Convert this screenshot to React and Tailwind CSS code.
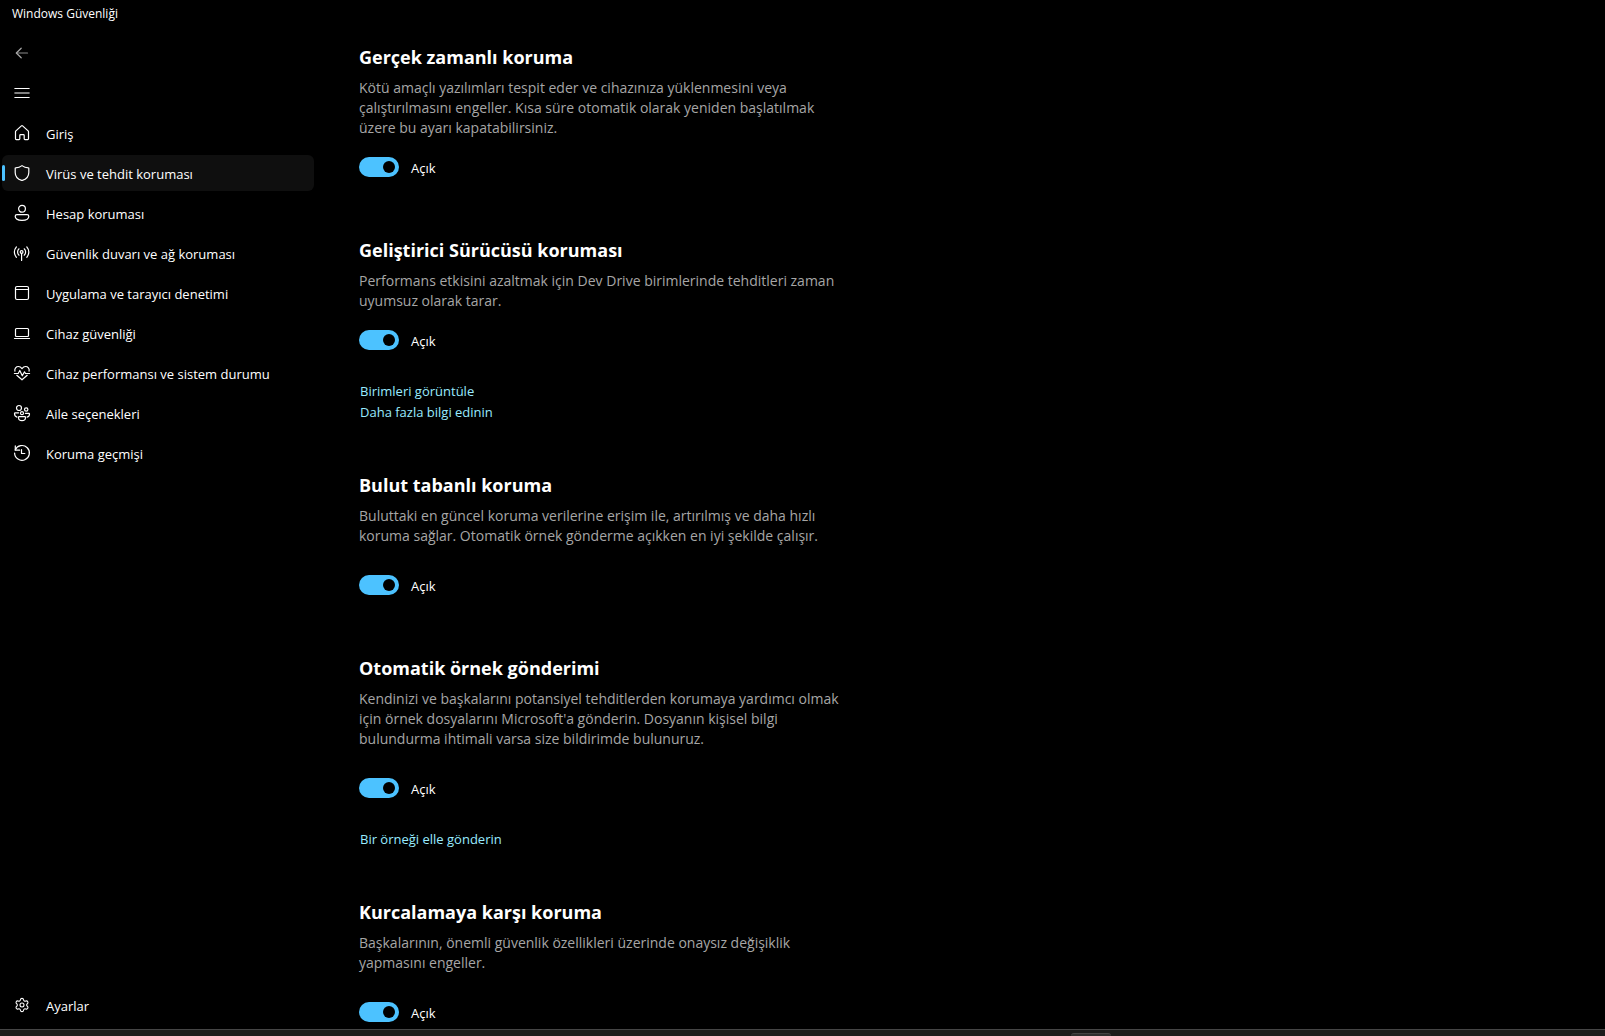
import { useState } from "react";
import { Settings } from "lucide-react";

function Icon({ children }) {
  return (
    <svg
      viewBox="0 0 16 16"
      className="size-4 shrink-0 overflow-visible"
      fill="none"
      stroke="currentColor"
      strokeWidth="1.2"
      strokeLinecap="round"
      strokeLinejoin="round"
      aria-hidden="true"
    >
      {children}
    </svg>
  );
}

const icons = {
  back: (
    <Icon>
      <path d="M2.5 8h11" stroke="#8a8a8a" />
      <path d="M7.2 3.2L2.3 8l4.9 4.8" stroke="#a8a8a8" />
    </Icon>
  ),
  menu: (
    <Icon>
      <path d="M.8 3.5h14.4M.8 12.5h14.4" strokeWidth="1" />
      <path d="M.8 8h14.4" strokeWidth="1" />
    </Icon>
  ),
  home: (
    <Icon>
      <path d="M7.4.9a.9.9 0 0 1 1.2 0l5.5 5c.3.3.4.6.4.9v7c0 .5-.3.8-.8.8h-2.7c-.5 0-.8-.3-.8-.8v-3.3c0-.5-.3-.8-.8-.8H6.600c-.5 0-.8.3-.8.8v3.3c0 .5-.3.8-.8.8H2.3c-.5 0-.8-.3-.8-.8v-7c0-.3.1-.6.4-.9z" />
    </Icon>
  ),
  shield: (
    <Icon>
      <path d="M8 .6c1.8 1.5 4 2.2 6.5 2.3.2 0 .3.2.3.4v4.1c0 3.9-2.2 6.6-6.5 8a1 1 0 0 1-.6 0C3.4 14 1.2 11.3 1.2 7.4V3.3c0-.2.1-.4.3-.4C4 2.8 6.2 2.1 8 .6z" />
    </Icon>
  ),
  person: (
    <Icon>
      <circle cx="8" cy="3.8" r="3.4" />
      <path d="M3 9.6h10c1 0 1.8.8 1.8 1.7 0 2.600-2.9 4.100-6.800 4.100s-6.800-1.500-6.800-4.100c0-.9.8-1.7 1.800-1.700z" />
    </Icon>
  ),
  antenna: (
    <Icon>
      <circle cx="7.6" cy="7" r="1.4" />
      <path d="M7.6 8.4v7.1M5 10.2a4.300 4.300 0 0 1 0-6.400M10.200 10.200a4.300 4.300 0 0 0 0-6.400M2.400 12.300C-.1 9-.1 5 2.400 1.900M12.800 12.300c2.500-3.300 2.500-7.300 0-10.400" />
    </Icon>
  ),
  window: (
    <Icon>
      <rect x="1.5" y="1.5" width="13" height="13" rx="1.5" />
      <path d="M1.5 4.500h13" />
    </Icon>
  ),
  laptop: (
    <Icon>
      <rect x="1.5" y="3.5" width="13" height="8" rx="1" />
      <path d="M.5 13.500h15" />
    </Icon>
  ),
  heart: (
    <Icon>
      <path d="M.9 6.200C.3 3.300 2.200 1.500 4.400 1.500c1.600 0 2.600.8 3.600 2.200 1-1.400 2-2.200 3.600-2.200 2.200 0 4.100 1.800 3.500 4.700M2.800 10.300L8 14.800l5.200-4.500" />
      <path d="M.4 8.500h3.800l1.600-3 2.500 5.300 2.200-4 1 1.700h4.100" />
    </Icon>
  ),
  family: (
    <Icon>
      <circle cx="5" cy="3" r="2.500" />
      <circle cx="12.200" cy="4.500" r="1.700" />
      <circle cx="8" cy="8.200" r="1.500" />
      <path d="M5.200 11.700h5.600c.4 0 .7.3.7.7 0 2-1.500 3.200-3.500 3.200s-3.500-1.200-3.500-3.200c0-.4.3-.7.7-.7z" />
      <path d="M4.600 7.800H1.200c-.4 0-.7.3-.7.7 0 1.800.9 3.100 2.500 3.600M11.400 8.300h3.400c.4 0 .7.3.7.7 0 1.600-.8 2.700-2.400 3.100" />
    </Icon>
  ),
  history: (
    <Icon>
      <path d="M1.200 5A7.400 7.400 0 1 1 .6 8" />
      <path d="M1.300.9v4.300h4.300M7.500 4.500v4h3.300" />
    </Icon>
  ),
  settings: <Settings className="size-4 shrink-0" strokeWidth={1.6} aria-hidden="true" />,
};

const navItems = [
  { icon: "home", label: "Giriş" },
  { icon: "shield", label: "Virüs ve tehdit koruması" },
  { icon: "person", label: "Hesap koruması" },
  { icon: "antenna", label: "Güvenlik duvarı ve ağ koruması" },
  { icon: "window", label: "Uygulama ve tarayıcı denetimi" },
  { icon: "laptop", label: "Cihaz güvenliği" },
  { icon: "heart", label: "Cihaz performansı ve sistem durumu" },
  { icon: "family", label: "Aile seçenekleri" },
  { icon: "history", label: "Koruma geçmişi" },
];

const sections = [
  {
    id: "realtime",
    title: "Gerçek zamanlı koruma",
    text: "Kötü amaçlı yazılımları tespit eder ve cihazınıza yüklenmesini veya çalıştırılmasını engeller. Kısa süre otomatik olarak yeniden başlatılmak üzere bu ayarı kapatabilirsiniz.",
    compact: true,
    links: [],
  },
  {
    id: "devdrive",
    title: "Geliştirici Sürücüsü koruması",
    text: "Performans etkisini azaltmak için Dev Drive birimlerinde tehditleri zaman uyumsuz olarak tarar.",
    compact: true,
    links: ["Birimleri görüntüle", "Daha fazla bilgi edinin"],
  },
  {
    id: "cloud",
    title: "Bulut tabanlı koruma",
    text: "Buluttaki en güncel koruma verilerine erişim ile, artırılmış ve daha hızlı koruma sağlar. Otomatik örnek gönderme açıkken en iyi şekilde çalışır.",
    links: [],
  },
  {
    id: "samples",
    title: "Otomatik örnek gönderimi",
    text: "Kendinizi ve başkalarını potansiyel tehditlerden korumaya yardımcı olmak için örnek dosyalarını Microsoft'a gönderin. Dosyanın kişisel bilgi bulundurma ihtimali varsa size bildirimde bulunuruz.",
    links: ["Bir örneği elle gönderin"],
  },
  {
    id: "tamper",
    title: "Kurcalamaya karşı koruma",
    text: "Başkalarının, önemli güvenlik özellikleri üzerinde onaysız değişiklik yapmasını engeller.",
    links: [],
    last: true,
  },
];

function NavButton({ icon, label, active, onClick }) {
  return (
    <button
      type="button"
      onClick={onClick}
      aria-current={active ? "page" : undefined}
      className={`relative flex h-9 w-full items-center gap-4 rounded-md pl-3 text-left text-[13px] leading-5 ${active ? "bg-[#0f0f0f]" : ""}`}
    >
      {active && <span className="absolute left-0 h-4 w-[3px] rounded-full bg-[#4cc2ff]" />}
      {icons[icon]}
      <span className="pt-0.5">{label}</span>
    </button>
  );
}

function Section({ id, title, text, compact, links, last }) {
  const [on, setOn] = useState(true);
  const spacing = last ? "" : links.length ? "mb-12" : "mb-[59px]";
  return (
    <section className={spacing}>
      <h2 className="text-[18px] leading-7 font-bold">{title}</h2>
      <p className="mt-[7px] text-[14px] leading-5 text-[#a6a6a6]">{text}</p>
      <div className={`flex h-5 items-center gap-3 ${compact ? "mt-[19px]" : "mt-[29px]"}`}>
        <input
          id={id}
          type="checkbox"
          role="switch"
          checked={on}
          onChange={() => setOn(!on)}
          aria-label={title}
          className="flex h-5 w-10 appearance-none items-center rounded-full border border-[#9a9a9a] px-1 before:size-3 before:rounded-full before:bg-[#cfcfcf] checked:justify-end checked:border-0 checked:bg-[#4cc2ff] checked:before:bg-black"
        />
        <label htmlFor={id} className="pt-0.5 text-[13px] leading-5">
          {on ? "Açık" : "Kapalı"}
        </label>
      </div>
      {links.length > 0 && (
        <div className="mt-[31px] flex flex-col items-start pl-px">
          {links.map((link) => (
            <a key={link} href="#" className="text-[13px] leading-[21px] text-[#99ebff]">
              {link}
            </a>
          ))}
        </div>
      )}
    </section>
  );
}

export default function App() {
  const [page, setPage] = useState(1);
  return (
    <div className="flex min-h-screen flex-col bg-black font-['Open_Sans','Noto_Sans',sans-serif] text-white">
      <header className="mb-[7px] flex h-7 items-center pl-3 text-[12px] leading-4">Windows Güvenliği</header>
      <div className="flex grow">
        <nav className="flex w-[314px] shrink-0 flex-col gap-1 pb-1.5 pl-0.5">
          <button type="button" aria-label="Geri" className="flex h-9 w-10 items-center pl-3">
            {icons.back}
          </button>
          <button type="button" aria-label="Menü" className="flex h-9 w-10 items-center pl-3">
            {icons.menu}
          </button>
          {navItems.map((item, i) => (
            <NavButton key={item.icon} {...item} active={i === page} onClick={() => setPage(i)} />
          ))}
          <div className="mt-auto">
            <NavButton icon="settings" label="Ayarlar" active={page === 9} onClick={() => setPage(9)} />
          </div>
        </nav>
        <main className="ml-[45px] max-w-[490px] grow pt-2">
          {sections.map((s) => (
            <Section key={s.id} {...s} />
          ))}
        </main>
      </div>
      <footer className="flex h-[7px] items-end justify-end overflow-hidden border-t border-[#454545] bg-[#1d1b1b] pr-[494px]">
        <div className="h-[3px] w-10 rounded-t-sm border-t border-[#454343] bg-[#302e2e]" />
      </footer>
    </div>
  );
}
